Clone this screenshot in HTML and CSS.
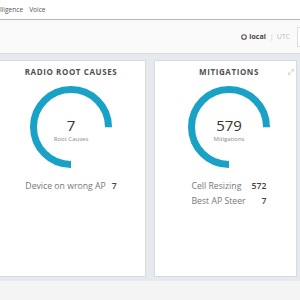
FILE: index.html
```html
<!DOCTYPE html>
<html>
<head>
<meta charset="utf-8">
<link rel="stylesheet" href="styles.css">
</head>
<body>
<div class="topnav">
  <span class="navlink first">Intelligence</span>
  <span class="navlink">Voice</span>
</div>
<div class="toolbar">
  <div class="tz">
    <svg class="clock" width="6" height="6" viewBox="0 0 6 6"><circle cx="3" cy="3" r="2.3" fill="none" stroke="#555" stroke-width="1.1"/></svg>
    <span class="tz-local">local</span>
    <span class="tz-sep">|</span>
    <span class="tz-utc">UTC</span>
  </div>
  <div class="tb-box"></div>
</div>
<div class="main">
  <div class="cards">
    <div class="card card-left">
      <div class="card-title">RADIO ROOT CAUSES</div>
      <div class="ring">
        <svg width="82" height="82" viewBox="0 0 82 82">
          <circle cx="41" cy="41" r="37.5" fill="none" stroke="#19a1c6" stroke-width="7" stroke-dasharray="176.7 300" transform="rotate(90 41 41)"/>
        </svg>
        <div class="ring-text">
          <div class="ring-num">7</div>
          <div class="ring-label">Root Causes</div>
        </div>
      </div>
      <div class="stats">
        <span class="stat-name">Device on wrong AP</span><span class="stat-val">7</span>
      </div>
    </div>
    <div class="card card-right">
      <svg class="expand" width="6" height="6" viewBox="0 0 6 6"><path d="M0.5 5.5 L5.5 0.5 M3.2 0.5 H5.5 V2.8 M0.5 3.2 V5.5 H2.8" fill="none" stroke="#d0d0d0" stroke-width="0.8"/></svg>
      <div class="card-title">MITIGATIONS</div>
      <div class="ring">
        <svg width="82" height="82" viewBox="0 0 82 82">
          <circle cx="41" cy="41" r="37.5" fill="none" stroke="#19a1c6" stroke-width="7" stroke-dasharray="176.7 300" transform="rotate(90 41 41)"/>
        </svg>
        <div class="ring-text">
          <div class="ring-num">579</div>
          <div class="ring-label">Mitigations</div>
        </div>
      </div>
      <div class="stats">
        <span class="stat-name">Cell Resizing</span><span class="stat-val">572</span>
        <span class="stat-name">Best AP Steer</span><span class="stat-val">7</span>
      </div>
    </div>
  </div>
</div>
<div class="footer"></div>
</body>
</html>
```
FILE: styles.css
```css
html, body {
  margin: 0;
  padding: 0;
}
body {
  width: 300px;
  height: 300px;
  overflow: hidden;
  font-family: "Open Sans", "Liberation Sans", sans-serif;
  background: #f4f4f4;
}
.topnav {
  height: 19px;
  background: #fff;
  border-bottom: 1px solid #b5b5b5;
  display: flex;
  align-items: center;
  gap: 6px;
  margin-left: -12px;
  font-size: 6.6px;
  color: #555;
}
.toolbar {
  height: 33px;
  background: #fafafa;
  border-bottom: 1px solid #dcdcdc;
  display: flex;
  align-items: center;
  justify-content: flex-end;
}
.tz {
  display: flex;
  align-items: center;
  gap: 1px;
  font-size: 7px;
  margin-right: 7px;
}
.clock { display: block; margin-right: 1px; }
.tz-local { font-weight: 700; color: #444; }
.tz-sep { color: #ccc; margin: 0 2px 0 3px; }
.tz-utc { color: #bbb; }
.tb-box {
  width: 10px;
  height: 18px;
  border: 1px solid #ddd;
  border-right: none;
  background: #fff;
  margin-right: -8px;
}
.main {
  background: #e6e9ed;
  padding: 6px 0 4px 0;
}
.cards {
  display: grid;
  grid-template-columns: 150px 143px;
  column-gap: 8px;
  margin-left: -4px;
}
.card {
  position: relative;
  height: 217px;
  background: #fff;
  border: 1px solid #d8dbdf;
  display: flex;
  flex-direction: column;
  align-items: center;
  padding-top: 5px;
  box-sizing: border-box;
}
.card-right {
  padding-left: 7px;
}
.card-title {
  font-size: 8px;
  line-height: 11px;
  font-weight: 700;
  color: #505050;
  letter-spacing: 0.6px;
}
.ring {
  display: grid;
  margin-top: 9px;
}
.ring > svg, .ring > .ring-text {
  grid-area: 1 / 1;
}
.ring svg { display: block; }
.ring-text {
  display: flex;
  flex-direction: column;
  align-items: center;
  justify-content: center;
  padding-top: 6px;
}
.ring-num {
  font-size: 15px;
  line-height: 16px;
  color: #333;
}
.ring-label {
  font-size: 6px;
  line-height: 8px;
  color: #888;
  margin-top: 2px;
}
.stats {
  margin-top: 11px;
  display: grid;
  grid-template-columns: auto auto;
  column-gap: 6px;
  font-size: 8.7px;
  line-height: 15px;
}
.stat-name { color: #777; }
.stat-val { color: #444; font-weight: 600; text-align: right; }
.expand {
  position: absolute;
  top: 8px;
  right: 2px;
}
.footer {
  height: 20px;
  background: #f4f4f4;
}
```
